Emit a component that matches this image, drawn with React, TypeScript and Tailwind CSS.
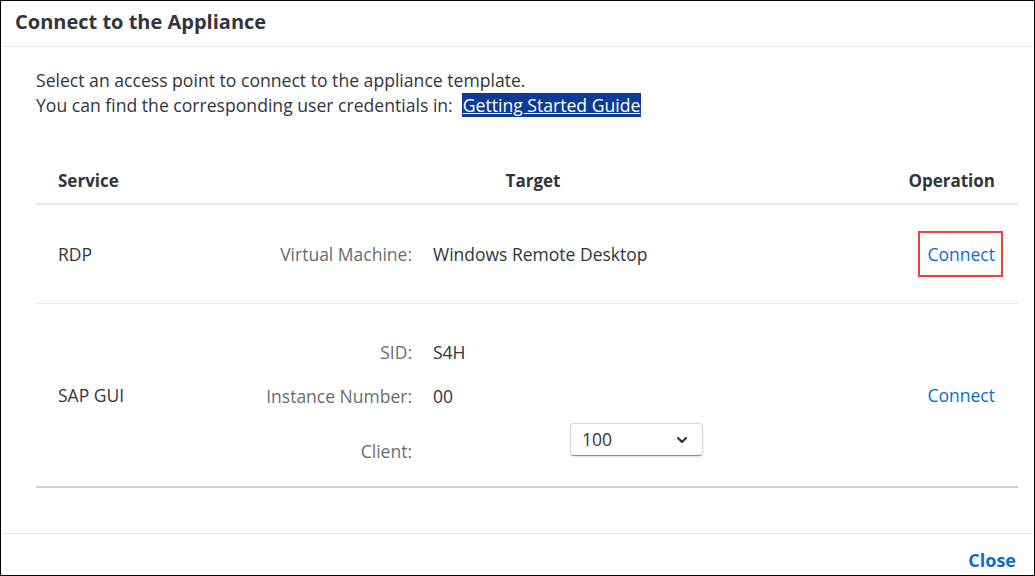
import { ChevronDown } from "lucide-react";

const font = { fontFamily: '"Open Sans", "Liberation Sans", Arial, sans-serif' };

function Connect({ marked }: { marked?: boolean }) {
  return (
    <span className="relative text-[#0a6ed1] cursor-pointer">
      Connect
      {marked && (
        <span className="absolute -left-[10px] -right-[8px] -top-[11px] -bottom-[11px] border-2 border-[#ec3f3f]" />
      )}
    </span>
  );
}

export default function App() {
  return (
    <div
      className="w-[1035px] h-[576px] border border-black bg-white flex flex-col text-[17.5px] text-[#32363a]"
      style={font}
    >
      {/* header */}
      <div className="h-[46px] shrink-0 flex items-center pl-[14px] border-b border-[#e5e8ea]">
        <h1 className="text-[20px] font-bold text-[#32363a] -mt-[3px]">Connect to the Appliance</h1>
      </div>

      {/* body */}
      <div className="flex-1 pl-[35px] pr-[16px] pt-[21px]">
        <div className="leading-[25px] text-[17.6px]">
          <p>Select an access point to connect to the appliance template.</p>
          <p>
            You can find the corresponding user credentials in:
            <a className="ml-[9px] px-[1px] bg-[#0b3b95] text-white underline">Getting Started Guide</a>
          </p>
        </div>

        <div className="mt-[41px]">
          {/* table head */}
          <div className="h-[46px] flex items-center pl-[22px] pr-[23px] border-b-2 border-[#e5e8ea] font-bold text-[17px]">
            <div className="w-[133px]">Service</div>
            <div className="flex-1 text-center">Target</div>
            <div className="w-[120px] text-right">Operation</div>
          </div>

          {/* RDP row */}
          <div className="h-[99px] flex items-center pl-[22px] pr-[23px] border-b border-[#e5e8ea]">
            <div className="w-[133px]">RDP</div>
            <div className="flex-1 flex">
              <div className="w-[221px] text-right text-[#6a6d70]">Virtual Machine:</div>
              <div className="ml-[21px]">Windows Remote Desktop</div>
            </div>
            <div className="w-[120px] text-right">
              <Connect marked />
            </div>
          </div>

          {/* SAP GUI row */}
          <div className="flex items-center pl-[22px] pr-[23px] border-b-2 border-[#c9d0d7]">
            <div className="w-[133px]">SAP GUI</div>
            <div className="flex-1 pt-[26px] pb-[16px]">
              <div className="h-[44px] flex items-center">
                <div className="w-[221px] text-right text-[#6a6d70]">SID:</div>
                <div className="ml-[21px]">S4H</div>
              </div>
              <div className="h-[44px] flex items-center">
                <div className="w-[221px] text-right text-[#6a6d70]">Instance Number:</div>
                <div className="ml-[21px]">00</div>
              </div>
              <div className="h-[52px] flex items-start">
                <div className="w-[221px] text-right text-[#6a6d70] mt-[22px] leading-[22px]">Client:</div>
                <div className="ml-[158px] mt-[5px] w-[133px] h-[33px] flex items-center justify-between pl-[11px] pr-[12px] bg-white border border-[#d5dadd] border-b-[#89919a] rounded-[4px] shadow-[0_1px_2px_rgba(0,0,0,0.12)]">
                  <span>100</span>
                  <ChevronDown className="w-[16px] h-[16px] text-[#32363a]" strokeWidth={3.2} />
                </div>
              </div>
            </div>
            <div className="w-[120px] text-right">
              <Connect />
            </div>
          </div>
        </div>
      </div>

      {/* footer */}
      <div className="h-[42px] shrink-0 flex items-center justify-end pr-[18px] border-t border-[#e5e8ea]">
        <button className="text-[18px] font-bold text-[#0a6ed1] pt-[12px]">Close</button>
      </div>
    </div>
  );
}
